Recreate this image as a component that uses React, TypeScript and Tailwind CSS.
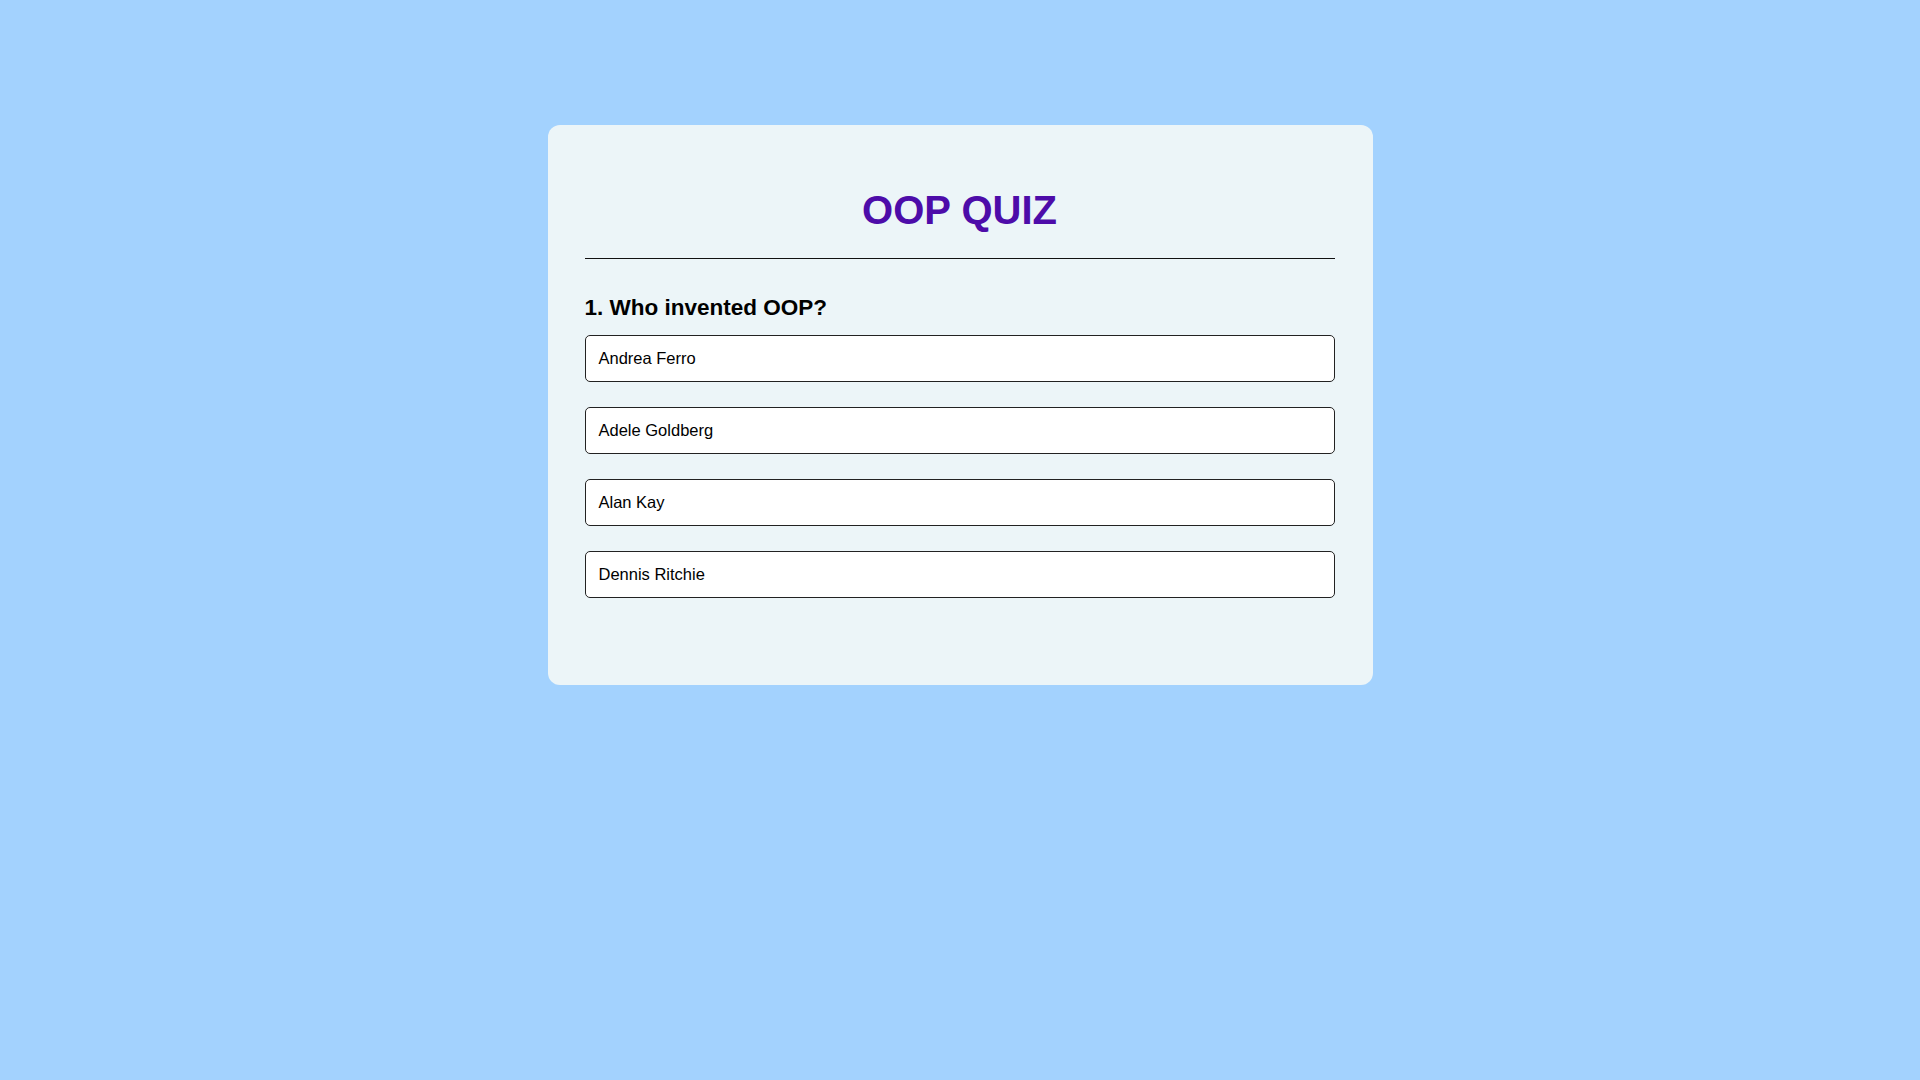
import React from "react";

const options = ["Andrea Ferro", "Adele Goldberg", "Alan Kay", "Dennis Ritchie"];

export default function App() {
  return (
    <div
      className="min-h-screen w-full bg-[#a3d2fe] flex justify-center pt-[125px]"
      style={{ fontFamily: '"Liberation Sans", Arial, sans-serif' }}
    >
      <div className="w-[825px] h-[560px] rounded-[12px] bg-[#ecf5f8] pl-[37px] pr-[38px] pt-[63px]">
        <h1 className="text-[40px] leading-[45px] font-bold text-center text-[#4d0ca9]">OOP QUIZ</h1>
        <div className="mt-[25px] h-px bg-[#111]" />
        <h2 className="mt-[36px] text-[22.5px] leading-[25px] font-bold text-black">1. Who invented OOP?</h2>
        <div className="mt-[15px] flex flex-col gap-[25px]">
          {options.map((o) => (
            <div
              key={o}
              className="h-[47px] flex items-center px-[13px] pb-px bg-white border border-[#222] rounded-[5px] text-[16.5px] text-black"
            >
              {o}
            </div>
          ))}
        </div>
      </div>
    </div>
  );
}
